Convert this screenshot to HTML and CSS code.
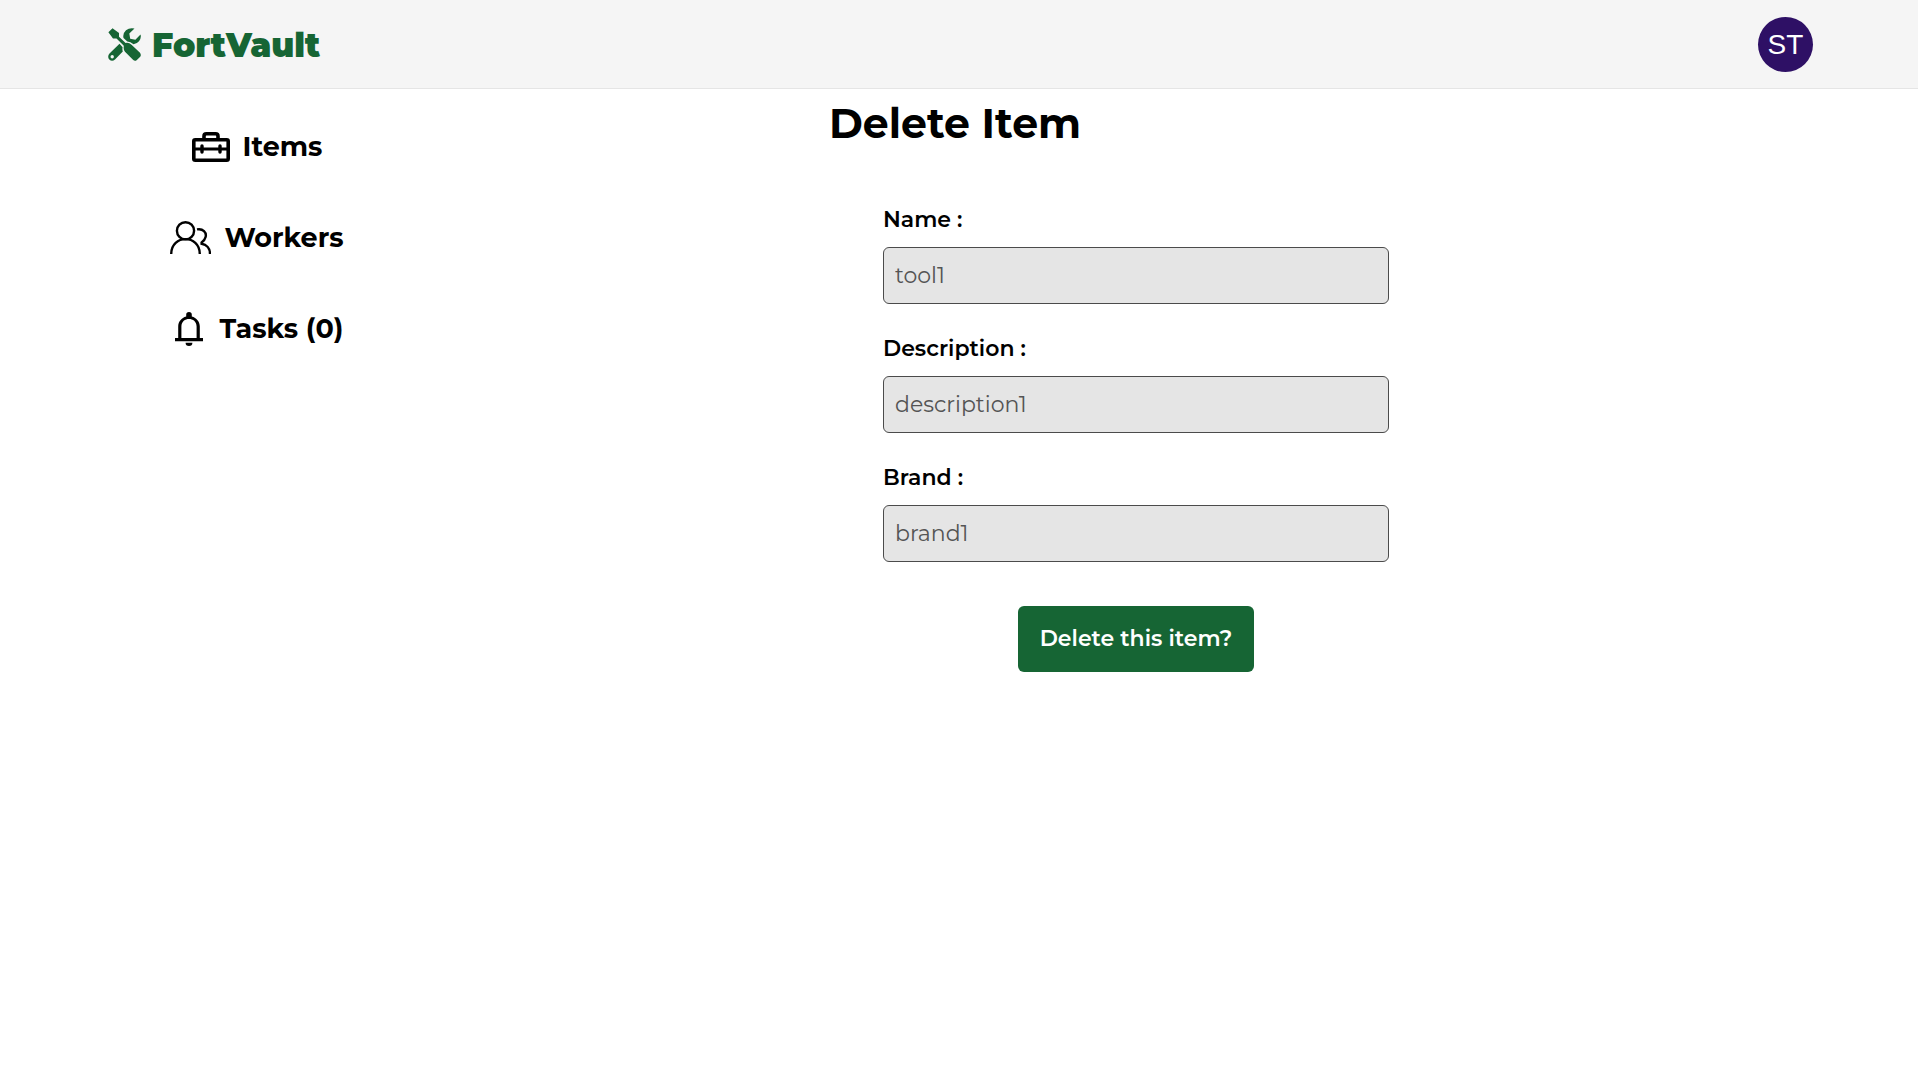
FILE: index.html
```html
<!DOCTYPE html>
<html lang="en">
<head>
<meta charset="utf-8">
<meta name="viewport" content="width=device-width, initial-scale=1">
<title>FortVault - Delete Item</title>
<link rel="stylesheet" href="styles.css">
</head>
<body>
<header class="topbar">
  <a class="brand" href="#">
    <svg class="brand-icon" viewBox="0 0 33 33" aria-hidden="true">
      <path fill="currentColor" d="M4.500 0.300 L11 5 V8.800 L17.600 15 L19 14.800 Q21.500 15 23.500 16.800 L32 24.800 Q33.500 27 32.200 28.800 L28.600 32.200 Q26.800 33.400 25 31.800 L17 23.800 Q15.200 21.500 15.800 18.400 L15.600 17.400 L8.500 10.600 H5 L0.400 4.300 Z"/>
      <path fill="currentColor" d="M26.500 0.500 L21.300 5.600 L22.200 10.800 L27.400 11.700 L32.500 6.500 Q33.600 10 31 13.200 Q28.600 16 25.500 16.300 Q22.500 13.600 19.300 13.400 L15.500 10 Q14.500 5.500 18 2.300 Q21.500 -0.600 26.500 0.500 Z"/>
      <path fill="currentColor" fill-rule="evenodd" d="M11.500 15.800 L14.600 19.200 Q14.100 21.500 14.800 23.600 L7 31.600 Q4 34 1.300 31.600 Q-1 28.700 1.500 25.600 Z M4.200 27 A1.700 1.700 0 1 0 4.200 30.400 A1.700 1.700 0 1 0 4.200 27 Z"/>
    </svg>
    <span>FortVault</span>
  </a>
  <button class="avatar" type="button" aria-label="Account">ST</button>
</header>
<div class="layout">
  <nav class="sidebar">
    <a class="nav-link" href="#">
      <svg class="icon-box" viewBox="0 0 38 30" aria-hidden="true" fill="none" stroke="currentColor" stroke-width="3.600" stroke-linejoin="round">
        <rect x="1.800" y="7.800" width="34.400" height="20.400" rx="1.500"/>
        <path d="M12 7.500 V4.200 Q12 1.800 14.400 1.800 H23.600 Q26 1.800 26 4.200 V7.500"/>
        <path d="M2 17 H36" stroke-width="3"/>
        <path d="M10 14 V20 M28 14 V20" stroke-linecap="round" stroke-width="3.400"/>
      </svg>
      <span>Items</span>
    </a>
    <a class="nav-link" href="#">
      <svg class="icon-people" viewBox="0 0 41 34" aria-hidden="true" fill="none" stroke="currentColor" stroke-width="2.400">
        <circle cx="15.500" cy="9.800" r="8.600"/>
        <path d="M1.200 33 C1.200 13.200 29.800 13.200 29.800 33"/>
        <path d="M27 8.400 C33 7.200 36.800 11.500 35.600 16 C34.900 19 33 20.500 31.600 21.500 V22.800 C36.500 23.600 40 27.500 40 33"/>
      </svg>
      <span>Workers</span>
    </a>
    <a class="nav-link" href="#">
      <svg class="icon-bell" viewBox="0 0 36 34" aria-hidden="true">
        <path fill="currentColor" fill-rule="evenodd" d="M4 26 H7.200 V14.500 C7.200 9.500 10.500 5.600 15.200 4.400 V2.800 A2.800 2.800 0 0 1 20.800 2.800 V4.400 C25.500 5.600 28.800 9.500 28.800 14.500 V26 H32 V29.200 H4 Z M10.400 26 H25.600 V14.500 C25.600 4.600 10.400 4.600 10.400 14.500 Z"/>
        <path fill="currentColor" d="M14.600 30.800 H21.400 A3.400 3.200 0 0 1 14.600 30.800 Z"/>
      </svg>
      <span>Tasks (0)</span>
    </a>
  </nav>
  <main class="content">
    <div class="panel">
      <h1 class="title">Delete Item</h1>
      <form class="form">
        <div class="field">
          <label class="label" for="name">Name :</label>
          <input class="input" id="name" type="text" value="tool1" disabled>
        </div>
        <div class="field">
          <label class="label" for="description">Description :</label>
          <input class="input" id="description" type="text" value="description1" disabled>
        </div>
        <div class="field">
          <label class="label" for="brand">Brand :</label>
          <input class="input" id="brand" type="text" value="brand1" disabled>
        </div>
        <button class="submit" type="submit">Delete this item?</button>
      </form>
    </div>
  </main>
</div>
</body>
</html>
```
FILE: styles.css
```css
* {
  box-sizing: border-box;
}

body {
  margin: 0;
  background: #fff;
  color: #000;
  font-family: Montserrat, Inter, sans-serif;
}

a {
  color: inherit;
  text-decoration: none;
}

svg {
  display: block;
  flex: none;
}

.topbar {
  display: flex;
  align-items: center;
  justify-content: space-between;
  padding: 17px 105px 16px 108px;
  background: #f5f5f5;
  border-bottom: 1px solid #e5e5e5;
}

.brand {
  display: flex;
  align-items: center;
  gap: 11px;
  color: #166534;
  font-size: 33px;
  font-weight: 900;
  line-height: 40px;
}

.brand-icon {
  width: 33px;
  height: 33px;
}

.avatar {
  width: 55px;
  height: 55px;
  padding: 0;
  border: 0;
  border-radius: 50%;
  background: #2e1065;
  color: #fff;
  font-family: "Liberation Sans", Arial, sans-serif;
  font-size: 28px;
}

.layout {
  display: flex;
}

.sidebar {
  display: flex;
  flex-direction: column;
  align-items: center;
  gap: 51px;
  flex: none;
  width: 354px;
  padding: 38px 0 0 160px;
}

.nav-link {
  display: flex;
  align-items: center;
  gap: 13px;
  font-size: 27px;
  font-weight: 700;
  line-height: 40px;
  white-space: nowrap;
}

.icon-box {
  width: 38px;
  height: 30px;
}

.icon-people {
  width: 41px;
  height: 34px;
}

.icon-bell {
  width: 36px;
  height: 34px;
}

.content {
  flex: 1;
  display: flex;
  justify-content: center;
}

.panel {
  width: 614px;
  max-width: 100%;
}

.title {
  margin: 10px 0 0;
  font-size: 41px;
  font-weight: 700;
  line-height: 48px;
}

.form {
  display: flex;
  flex-direction: column;
  gap: 28px;
  padding: 56px 54px 0;
}

.field {
  display: flex;
  flex-direction: column;
  gap: 11px;
}

.label {
  font-size: 22px;
  font-weight: 600;
  line-height: 33px;
}

.input {
  width: 100%;
  height: 57px;
  padding: 0 11px;
  border: 1px solid #4b4b4b;
  border-radius: 6px;
  background: #e5e5e5;
  color: #545454;
  font-family: inherit;
  font-size: 22px;
  font-weight: 400;
}

.submit {
  align-self: center;
  margin-top: 16px;
  padding: 16px 22px;
  border: 0;
  border-radius: 6px;
  background: #166534;
  color: #fff;
  font-family: inherit;
  font-size: 22px;
  font-weight: 600;
  line-height: 34px;
}
```
